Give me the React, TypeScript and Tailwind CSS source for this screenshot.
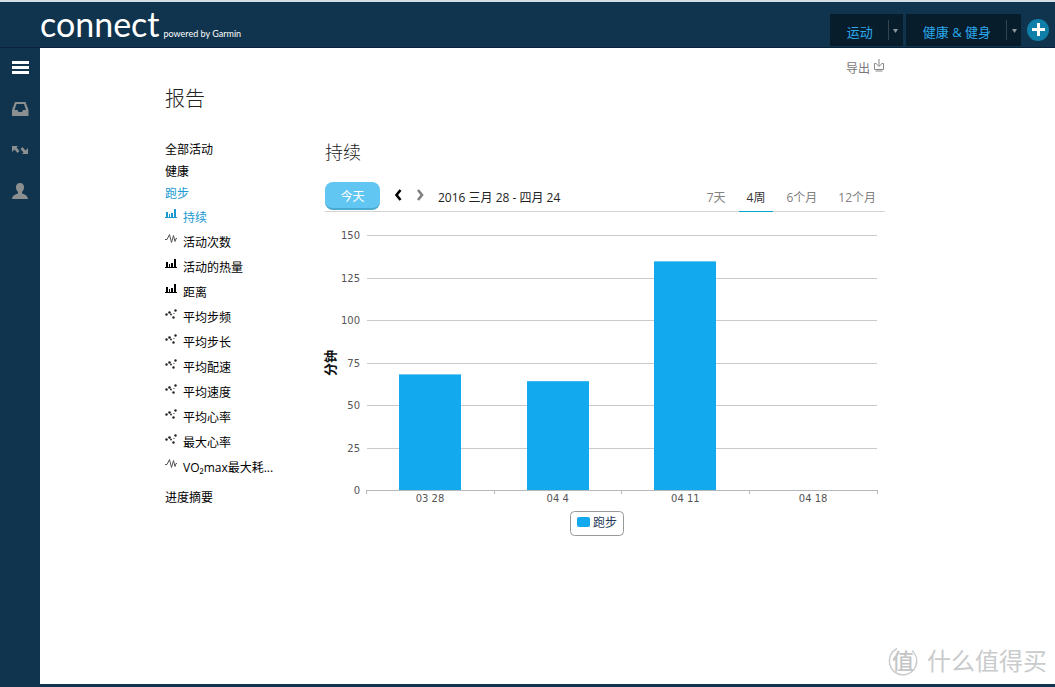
import React, { useState } from "react";

type IconKind = "bars" | "pulse" | "dots";

const reports: { label: string; icon: IconKind }[] = [
  { label: "持续", icon: "bars" },
  { label: "活动次数", icon: "pulse" },
  { label: "活动的热量", icon: "bars" },
  { label: "距离", icon: "bars" },
  { label: "平均步频", icon: "dots" },
  { label: "平均步长", icon: "dots" },
  { label: "平均配速", icon: "dots" },
  { label: "平均速度", icon: "dots" },
  { label: "平均心率", icon: "dots" },
  { label: "最大心率", icon: "dots" },
  { label: "VO₂max最大耗...", icon: "pulse" },
];

const ranges = ["7天", "4周", "6个月", "12个月"];

const weeks = [
  { label: "03 28", minutes: 68 },
  { label: "04 4", minutes: 64 },
  { label: "04 11", minutes: 134.5 },
  { label: "04 18", minutes: 0 },
];

function ReportIcon({ kind }: { kind: IconKind }) {
  if (kind === "bars") {
    return (
      <svg width="12" height="10" viewBox="0 0 12 10" fill="currentColor" aria-hidden="true">
        <path d="M0 8h12v1H0zM1 3h2v5H1zM4 5h1v3H4zM6 4h2v4H6zM9 0h2v8H9z" />
      </svg>
    );
  }
  if (kind === "pulse") {
    return (
      <svg width="12" height="10" viewBox="0 0 12 10" fill="none" stroke="#555" strokeWidth="1" aria-hidden="true">
        <path d="M0 5.500h2L4.500 0.500l2 8L8.500 1.500l1.500 6L11 4.500h1" />
      </svg>
    );
  }
  return (
    <svg width="12" height="10" viewBox="0 0 12 10" fill="#222" aria-hidden="true">
      <circle cx="1.500" cy="5.500" r="1.200" />
      <circle cx="4.500" cy="3.500" r="1.300" />
      <circle cx="6" cy="5.500" r="0.900" />
      <circle cx="8.500" cy="8.500" r="1.200" />
      <circle cx="10.500" cy="1.500" r="1.200" />
      <circle cx="9" cy="4.500" r="0.600" />
    </svg>
  );
}

function NavItem({ label }: { label: string }) {
  return (
    <div className="flex h-8 items-center bg-[#081d2b]">
      <a href="#" className="pt-1 pr-[15px] pl-[17px] text-[13px] leading-5 text-[#2aa9ee]">
        {label}
      </a>
      <button aria-label={label + " 菜单"} className="flex h-5 w-[15px] items-center justify-center border-l border-[#34454f] pt-[2px]">
        <svg width="5" height="4" viewBox="0 0 5 4" fill="#8b98a0" aria-hidden="true">
          <path d="M0 0h5L2.500 4z" />
        </svg>
      </button>
    </div>
  );
}

function Header() {
  return (
    <header className="flex h-12 items-start justify-between border-t-2 border-b border-t-[#d3dfe6] border-b-[#08233a] bg-[#10344d] pl-10">
      <a href="#" className="flex items-baseline gap-1 pt-[2px] text-white">
        <span className="font-[Lato,sans-serif] text-[34px] leading-10">connect</span>
        <span className="font-[Lato,sans-serif] text-[9px] leading-4">powered by Garmin</span>
      </a>
      <nav className="flex items-center gap-[3px] pt-3 pr-[6px]">
        <NavItem label="运动" />
        <NavItem label="健康 & 健身" />
        <button aria-label="添加" className="ml-[3px] flex size-[22px] items-center justify-center rounded-full bg-[#0f7ea8]">
          <svg width="14" height="14" viewBox="0 0 14 14" fill="#fff" aria-hidden="true">
            <path d="M6 0h3v5h5v3H9v5H6V8H1V5h5z" />
          </svg>
        </button>
      </nav>
    </header>
  );
}

function Rail() {
  return (
    <aside className="flex w-10 shrink-0 flex-col items-center gap-[21px] bg-[#10344d] pt-[10px]">
      <button aria-label="菜单">
        <svg width="18" height="20" viewBox="0 0 18 20" fill="#fff" aria-hidden="true">
          <path d="M1 3h17v3H1zM1 8h17v3H1zM1 13h17v3H1z" />
        </svg>
      </button>
      <button aria-label="收件箱">
        <svg width="18" height="20" viewBox="0 0 18 20" fill="#8b8f90" aria-hidden="true">
          <path fillRule="evenodd" d="M4 3h10.500L17.500 11v6H1v-6zM5.500 5 3.500 11h3l1 2h3.500l1-2h3l-2-6z" />
        </svg>
      </button>
      <button aria-label="同步">
        <svg width="18" height="20" viewBox="0 0 18 20" fill="#8b8f90" aria-hidden="true">
          <path d="M1 6h6L5.500 7.500 8.500 11 6.500 13 3.500 9.500 1 12zM17 14h-6l1.500-1.500L9.500 9l2-2 3 3.500L17 8z" />
        </svg>
      </button>
      <button aria-label="个人">
        <svg width="18" height="20" viewBox="0 0 18 20" fill="#8b8f90" aria-hidden="true">
          <path d="M9 2c2.700 0 4 1.900 4 4.300 0 2-.8 3.800-2 4.700v1.500c2.800.9 5.500 1.800 6 5.500H1c.5-3.700 3.200-4.600 6-5.500V11C5.800 10.100 5 8.300 5 6.300 5 3.900 6.300 2 9 2z" />
        </svg>
      </button>
    </aside>
  );
}

function SideNav() {
  return (
    <nav className="w-40 shrink-0 text-xs text-black">
      <a href="#" className="block leading-[22px]">全部活动</a>
      <a href="#" className="block leading-[22px]">健康</a>
      <a href="#" className="block leading-[22px] text-[#1a9ad0]">跑步</a>
      <ul>
        {reports.map((r, i) => (
          <li key={r.label}>
            <a
              href="#"
              className={
                i === 0
                  ? "flex h-[25px] items-start gap-[6px] leading-[25px] text-[#1a9ad0]"
                  : "flex h-[25px] items-start gap-[6px] leading-[25px]"
              }
            >
              <span className="pt-1">
                <ReportIcon kind={r.icon} />
              </span>
              {r.label}
            </a>
          </li>
        ))}
      </ul>
      <a href="#" className="mt-[7px] block leading-[22px]">进度摘要</a>
    </nav>
  );
}

function Chart() {
  const baseline = 278;
  const perMinute = 1.7;
  return (
    <svg viewBox="0 0 560 330" className="block w-full overflow-visible font-['DejaVu_Sans','Noto_Sans_CJK_SC',sans-serif]" role="img" aria-label="持续">
      {[25, 50, 75, 100, 125, 150].map((v) => (
        <rect key={v} x="42" y={Math.round(baseline - v * perMinute)} width="510" height="1" fill="#c8cacc" />
      ))}
      {[0, 25, 50, 75, 100, 125, 150].map((v) => (
        <text key={v} x="35" y={baseline - v * perMinute + 4} textAnchor="end" fontSize="10" fill="#555">
          {v}
        </text>
      ))}
      {weeks.map((w, i) => (
        <g key={w.label}>
          <rect x={74 + Math.round(i * 127.7)} y={baseline - w.minutes * perMinute} width="62" height={w.minutes * perMinute} fill="#12a9ee" />
          <text x={105 + i * 127.7} y="290" textAnchor="middle" fontSize="10" fill="#555">
            {w.label}
          </text>
        </g>
      ))}
      <rect x="41" y={baseline} width="512" height="1" fill="#b4b8bb" />
      {[0, 1, 2, 3, 4].map((i) => (
        <rect key={i} x={41 + Math.round(i * 127.7)} y={baseline} width="1" height="4" fill="#b4b8bb" />
      ))}
      <text transform="translate(10 151) rotate(-90)" textAnchor="middle" fontSize="13" fontWeight="700" fill="#111">
        分钟
      </text>
      <rect x="245.500" y="299.500" width="53" height="24" rx="4" fill="#fff" stroke="#999" />
      <rect x="252" y="305" width="13" height="10" rx="2" fill="#12a9ee" />
      <text x="268" y="315" fontSize="12" fill="#1f3a57">
        跑步
      </text>
    </svg>
  );
}

function ReportPanel() {
  const [range, setRange] = useState("4周");
  return (
    <section className="min-w-0 flex-1">
      <h2 className="text-[18px] font-light leading-[26px] text-[#222]">持续</h2>
      <div className="mt-[17px] flex h-[30px] items-start border-b border-[#d4d4d4]">
        <button className="h-7 w-[55px] rounded-lg border-b-2 border-[#4aa9d0] bg-[#62c6f2] pt-[3px] text-xs text-white">今天</button>
        <button aria-label="上一段" className="ml-2 flex h-[26px] w-5 items-center justify-center">
          <svg width="10" height="12" viewBox="0 0 10 12" fill="none" stroke="#000" strokeWidth="2.600" aria-hidden="true">
            <path d="M7.500 1l-4 5 4 5" />
          </svg>
        </button>
        <button aria-label="下一段" className="flex h-[26px] w-6 items-center justify-center">
          <svg width="10" height="12" viewBox="0 0 10 12" fill="none" stroke="#808080" strokeWidth="2.600" aria-hidden="true">
            <path d="M3 1l4 5-4 5" />
          </svg>
        </button>
        <span className="pl-[6px] text-xs leading-8 text-[#222]">2016 三月 28 - 四月 24</span>
        <div className="mr-[1px] ml-auto flex gap-[5px]">
          {ranges.map((r) => (
            <button
              key={r}
              onClick={() => setRange(r)}
              className={
                r === range
                  ? "h-[30px] border-b border-b-[#00a5cf] px-2 pt-[2px] text-xs text-[#333]"
                  : "h-[30px] border-b border-b-transparent px-2 pt-[2px] text-xs text-[#808080]"
              }
            >
              {r}
            </button>
          ))}
        </div>
      </div>
      <Chart />
    </section>
  );
}

function Watermark() {
  return (
    <div className="pointer-events-none absolute right-2 bottom-[7px] flex items-center gap-2 text-[#c9cbcc]">
      <svg width="32" height="32" viewBox="0 0 32 32" aria-hidden="true">
        <path d="M10 3.500A14 14 0 0 0 16 30 14 14 0 0 0 25 5.500" fill="none" stroke="#c9cbcc" strokeWidth="1.500" />
        <text x="16" y="24" textAnchor="middle" fontSize="22" fontWeight="500" fill="#c3c5c6">
          值
        </text>
      </svg>
      <span className="text-[24px] leading-8">什么值得买</span>
    </div>
  );
}

export default function App() {
  return (
    <div className="flex min-h-screen flex-col bg-[#10344d] font-['Open_Sans','Noto_Sans_CJK_SC',sans-serif]">
      <Header />
      <div className="flex flex-1">
        <Rail />
        <main className="relative mb-[3px] flex-1 bg-white pr-5 pl-[125px]">
          <div className="max-w-[720px]">
            <div className="flex justify-end pt-[11px]">
              <button className="flex items-start gap-[3px] text-xs leading-5 text-[#777]">
                导出
                <svg width="12" height="13" viewBox="0 0 12 13" fill="none" stroke="#888" aria-hidden="true">
                  <path d="M3.500 4.500H1.500v6h9v-6h-2M6 0v7M3.500 5 6 7.500 8.500 5M2.500 12h7" />
                </svg>
              </button>
            </div>
            <h1 className="mt-1 text-[20px] font-light leading-8 text-[#222]">报告</h1>
            <div className="flex items-start pt-6">
              <SideNav />
              <ReportPanel />
            </div>
          </div>
          <Watermark />
        </main>
      </div>
    </div>
  );
}
